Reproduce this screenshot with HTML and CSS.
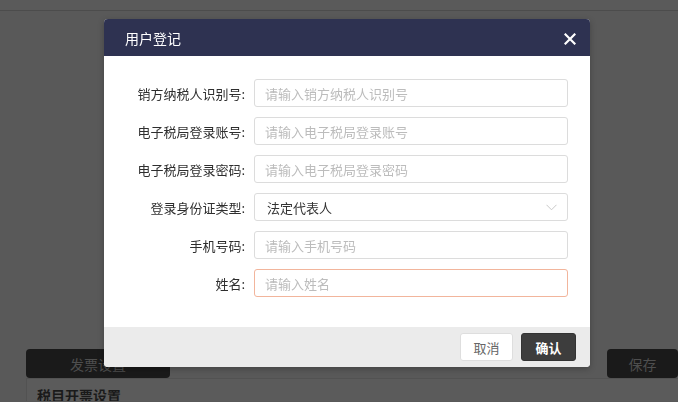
FILE: index.html
```html
<!DOCTYPE html>
<html lang="zh-CN">
<head>
    <meta charset="UTF-8">
    <title>用户登记</title>
    <link rel="stylesheet" href="styles.css">
</head>
<body>

    <!-- page under the mask -->
    <div class="page">
        <div class="topbar"></div>
        <div class="toolbar">
            <button class="dark-btn tab-btn">发票设置</button>
            <button class="dark-btn save-btn">保存</button>
        </div>
        <div class="panel">
            <div class="panel-title">税目开票设置</div>
        </div>
    </div>

    <!-- dialog -->
    <div class="modal">
        <div class="modal-header">
            <span class="modal-title">用户登记</span>
            <span class="modal-close">
                <svg width="12" height="12" viewBox="0 0 12 12">
                    <path d="M1.5 1.5 L10.5 10.5 M10.5 1.5 L1.5 10.5" stroke="#fff" stroke-width="2.2" stroke-linecap="square"/>
                </svg>
            </span>
        </div>
        <div class="modal-body">
            <div class="form-row">
                <label>销方纳税人识别号:</label>
                <input type="text" placeholder="请输入销方纳税人识别号">
            </div>
            <div class="form-row">
                <label>电子税局登录账号:</label>
                <input type="text" placeholder="请输入电子税局登录账号">
            </div>
            <div class="form-row">
                <label>电子税局登录密码:</label>
                <input type="text" placeholder="请输入电子税局登录密码">
            </div>
            <div class="form-row">
                <label>登录身份证类型:</label>
                <div class="select">
                    <span>法定代表人</span>
                    <svg width="11" height="7" viewBox="0 0 11 7">
                        <path d="M0.5 0.8 L5.5 5.8 L10.5 0.8" fill="none" stroke="#c8c8c8" stroke-width="1"/>
                    </svg>
                </div>
            </div>
            <div class="form-row">
                <label>手机号码:</label>
                <input type="text" placeholder="请输入手机号码">
            </div>
            <div class="form-row">
                <label>姓名:</label>
                <input type="text" class="error" placeholder="请输入姓名">
            </div>
        </div>
        <div class="modal-footer">
            <button class="btn btn-cancel">取消</button>
            <button class="btn btn-ok">确认</button>
        </div>
    </div>

</body>
</html>
```

FILE: styles.css
```css
body {
    margin: 0;
    background: #595959;
    font-family: "Noto Sans CJK SC", "Noto Sans", sans-serif;
    width: 678px;
    height: 402px;
    overflow: hidden;
}

/* Page behind the mask */
.topbar {
    height: 10px;
    background: #5a5a5a;
    border-bottom: 1px solid #4c4c4c;
}

.toolbar {
    display: flex;
    justify-content: space-between;
    padding-left: 26px;
    margin-top: 338px;
}

.dark-btn {
    background: #1a1a1a;
    color: #4e4e4e;
    border: none;
    border-radius: 4px;
    height: 29px;
    font-family: inherit;
    font-size: 14px;
    padding: 0;
}

.tab-btn {
    width: 144px;
}

.save-btn {
    width: 71px;
}

.panel {
    margin-left: 26px;
    border-top: 1px solid #525252;
    border-left: 1px solid #525252;
    background: #5b5b5b;
    height: 23px;
    overflow: hidden;
    padding: 6px 10px 0;
    box-sizing: border-box;
}

.panel-title {
    font-size: 14px;
    font-weight: bold;
    line-height: 20px;
    color: #1a1a1a;
}

/* Dialog */
.modal {
    position: fixed;
    left: 104px;
    top: 19px;
    width: 486px;
    background: #fff;
    border-radius: 4px;
    overflow: hidden;
    box-shadow: 0 2px 6px rgba(0, 0, 0, 0.25);
}

.modal-header {
    height: 37px;
    background: #2e3251;
    display: flex;
    align-items: center;
    justify-content: space-between;
    padding: 0 14px 0 21px;
}

.modal-title {
    color: #fff;
    font-size: 14px;
}

.modal-close {
    display: flex;
    margin-top: 2px;
}

.modal-body {
    padding: 23px 22px 30px 0;
    display: flex;
    flex-direction: column;
    gap: 10px;
}

.form-row {
    display: flex;
    align-items: center;
    height: 28px;
}

.form-row label {
    width: 141px;
    text-align: right;
    margin-right: 9px;
    font-size: 13px;
    color: #2e2e2e;
}

.form-row input,
.select {
    flex: 1;
    box-sizing: border-box;
    height: 28px;
    border: 1px solid #dcdcdc;
    border-radius: 3px;
    padding: 0 10px;
    font-family: inherit;
    font-size: 13px;
    color: #333;
    outline: none;
}

.form-row input::placeholder {
    color: #bcbcbc;
}

.form-row input.error {
    border-color: #f2b59c;
}

.select {
    display: flex;
    align-items: center;
    justify-content: space-between;
    padding-right: 10px;
    padding-left: 12px;
}

.modal-footer {
    height: 40px;
    background: #ebebeb;
    display: flex;
    justify-content: flex-end;
    align-items: center;
    gap: 8px;
    padding-right: 14px;
}

.btn {
    height: 28px;
    border-radius: 3px;
    font-family: inherit;
    font-size: 13px;
    padding: 0;
    cursor: pointer;
}

.btn-cancel {
    width: 53px;
    background: #fff;
    border: 1px solid #dedede;
    color: #666;
}

.btn-ok {
    width: 55px;
    background: #3d3d3d;
    border: 1px solid #333;
    color: #fff;
    font-weight: bold;
}
```
